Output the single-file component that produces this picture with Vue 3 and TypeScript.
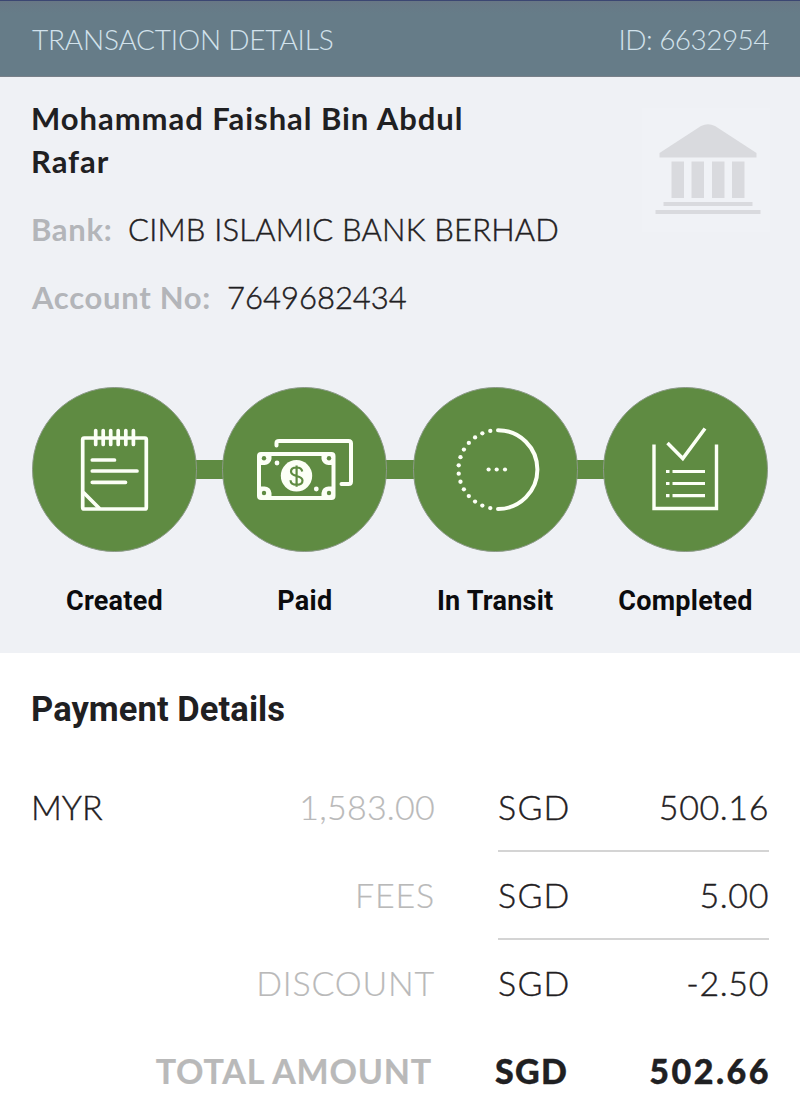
<script setup lang="ts">
interface Row {
  left?: string
  label: string
  currency: string
  amount: string
  ruled: boolean
  total?: boolean
}

const steps: string[] = ['Created', 'Paid', 'In Transit', 'Completed']

const rows: Row[] = [
  { left: 'MYR', label: '1,583.00', currency: 'SGD', amount: '500.16', ruled: true },
  { label: 'FEES', currency: 'SGD', amount: '5.00', ruled: true },
  { label: 'DISCOUNT', currency: 'SGD', amount: '-2.50', ruled: false },
  { label: 'TOTAL AMOUNT', currency: 'SGD', amount: '502.66', ruled: false, total: true },
]

// Dots of the dashed half of the transit ring
const ringDots = Array.from({ length: 14 }, (_, i) => {
  const a = ((101 + i * 12.15) * Math.PI) / 180
  return { x: 84.8 + 39.3 * Math.cos(a), y: 82.5 - 39.3 * Math.sin(a) }
})
</script>

<template>
  <main class="page">
    <header class="bar">
      <span class="bar-title">TRANSACTION DETAILS</span>
      <span class="bar-id">ID: 6632954</span>
    </header>

    <section class="summary">
      <div class="who">
        <div class="info">
          <h1 class="name">Mohammad Faishal Bin Abdul Rafar</h1>
          <p class="field"><span class="key k-bank">Bank:</span><span class="val v-bank">CIMB ISLAMIC BANK BERHAD</span></p>
          <p class="field"><span class="key k-acc">Account No:</span><span class="val v-acc">7649682434</span></p>
        </div>
        <div class="logo">
          <svg width="128" height="124" viewBox="0 0 128 124" fill="#d9dade">
            <path d="M17.500 49.500V45L59 18Q66 14.500 73 18L114.500 45V49.500Z" />
            <path d="M29.500 53.500h12.500v36.500h-12.500zM49.500 53.500h12.500v36.500h-12.500zM70 53.500h12.500v36.500h-12.500zM90 53.500h12.500v36.500h-12.500zM21.500 94h89v4h-89zM13.500 102h105v4h-105z" />
          </svg>
        </div>
      </div>

      <ol class="steps">
        <li v-for="(s, i) in steps" :key="s" class="step">
          <div class="disc">
            <svg v-if="i === 0" class="icon" viewBox="0 0 165 165" fill="none" stroke="#fcfff6" stroke-width="3.7" stroke-linecap="round" stroke-linejoin="round">
              <rect x="50.700" y="51" width="63.600" height="71" rx="1.500" />
              <path d="M63.700 43.500v14M71.200 43.500v14M78.700 43.500v14M86.200 43.500v14M93.800 43.500v14M101.400 43.500v14" />
              <path d="M60.300 73H82.500M60.300 84H105M60.300 95.300H93.500M52 106L67 121" />
            </svg>
            <svg v-else-if="i === 1" class="icon" viewBox="0 0 165 165" fill="none" stroke="#fcfff6" stroke-width="4">
              <path d="M54.500 58.500V56Q54.500 54 57 54H126.500Q129 54 129 56.500V94.500Q129 97 126.500 97H119.500" stroke-linecap="round" />
              <rect x="37" y="67" width="74.500" height="44" rx="2" />
              <g fill="#fcfff6" stroke="none">
                <path d="M37 67H49.500V72A7 7 0 0 1 42.500 78H37ZM111.500 67H99.500V72A7 7 0 0 0 106.500 78H111.500ZM37 111H49.500V106A7 7 0 0 0 42.500 99.500H37ZM111.500 111H99.500V106A7 7 0 0 1 106.500 99.500H111.500Z" />
                <circle cx="74.500" cy="88.800" r="15.700" />
                <circle cx="55" cy="76" r="2.400" />
                <circle cx="94.300" cy="102" r="2.400" />
              </g>
              <g fill="#5f8b42" stroke="none">
                <circle cx="42" cy="71.300" r="2.200" /><circle cx="107" cy="71.300" r="2.200" />
                <circle cx="42" cy="106" r="2.200" /><circle cx="107" cy="106" r="2.200" />
              </g>
              <path d="M80.200 84.500C79.800 81.500 77.500 80.500 74.500 80.500C71.300 80.500 69 82 69 84.500C69 87.500 71.500 88.200 74.500 89C77.800 89.800 80.500 90.700 80.500 93.500C80.500 96.300 78 97.800 74.700 97.800C71.200 97.800 68.700 96.300 68.500 93.200M74.600 78.500V99.800" stroke="#5f8b42" stroke-width="2.200" />
            </svg>
            <svg v-else-if="i === 2" class="icon" viewBox="0 0 165 165" fill="#fcfff6">
              <path d="M85 43.200A39.400 39.400 0 0 1 85 122" fill="none" stroke="#fcfff6" stroke-width="4" stroke-linecap="round" />
              <circle v-for="(d, n) in ringDots" :key="n" :cx="d.x" :cy="d.y" r="2.150" />
              <circle cx="75.600" cy="82.500" r="2.100" /><circle cx="83.700" cy="82.500" r="2.100" /><circle cx="92" cy="82.500" r="2.100" />
            </svg>
            <svg v-else class="icon" viewBox="0 0 165 165" fill="none" stroke="#fcfff6" stroke-width="3.400">
              <path d="M51 57.500V121.500H113.500V57.500" />
              <path d="M64.500 56L79.800 71.500L102 41.500" stroke-width="3.500" />
              <path d="M63 84.500h3.500M69.500 84.500h32.500M63 96.500h3.500M69.500 96.500h32.500M63 108.700h3.500M69.500 108.700h32.500" stroke-width="3.200" />
            </svg>
          </div>
          <span class="step-label">{{ s }}</span>
        </li>
      </ol>
    </section>

    <section class="payment">
      <h2 class="heading">Payment Details</h2>
      <div v-for="r in rows" :key="r.label" class="row" :class="{ total: r.total }">
        <span class="origin">{{ r.left }}</span>
        <span class="label" :class="{ num: r.left }">{{ r.label }}</span>
        <div class="sum" :class="{ ruled: r.ruled }">
          <span class="cur">{{ r.currency }}</span>
          <span class="amt">{{ r.amount }}</span>
        </div>
      </div>
    </section>
  </main>
</template>

<style>
body {
  margin: 0;
  background: #fff;
}
</style>

<style scoped>
.page {
  width: 800px;
  height: 1113px;
  overflow: hidden;
  background: #fff;
  color: #1f2022;
  font-family: Lato, "Liberation Sans", sans-serif;
}
.bar {
  box-sizing: border-box;
  height: 77px;
  padding: 0 31px 0 32px;
  border-top: 1px solid #3b4672;
  border-bottom: 1px solid #788089;
  background: linear-gradient(#687785, #667c88 12px);
  display: flex;
  justify-content: space-between;
  line-height: 77px;
  font-size: 28px;
  font-weight: 300;
  color: #d2e2ec;
  white-space: nowrap;
}
.bar-title { letter-spacing: -0.2px; }
.bar-id { letter-spacing: -0.55px; }
.summary {
  box-sizing: border-box;
  height: 576px;
  padding: 20px 32px 0;
  background: #eff1f5;
}
.who {
  display: flex;
  justify-content: space-between;
  height: 289.5px;
}
.info { width: 560px; }
.name {
  margin: 0 0 13px -1px;
  width: 450px;
  font-size: 31px;
  line-height: 42.5px;
  font-weight: 700;
  letter-spacing: 0.95px;
}
.field {
  margin: 0;
  display: flex;
  height: 68px;
  line-height: 68px;
  font-size: 31px;
  white-space: nowrap;
}
.key {
  color: #b3b5b9;
  font-weight: 700;
}
.val {
  font-weight: 300;
  -webkit-text-stroke: 0.45px currentColor;
}
.k-bank {
  width: 97px;
  margin-left: -1px;
  letter-spacing: 0.7px;
}
.k-acc {
  width: 195px;
  letter-spacing: 0.7px;
}
.v-bank { letter-spacing: 0.2px; }
.logo {
  width: 128px;
  height: 124px;
  margin: 11px -2px 0 0;
  background: #f0f2f6;
}
.logo svg { display: block; }
.steps {
  list-style: none;
  margin: 0;
  padding: 0;
  display: flex;
  justify-content: space-between;
  background: linear-gradient(#5f8b42, #5f8b42) 80px 73px / 570px 19px no-repeat;
}
.step {
  width: 165px;
  display: flex;
  flex-direction: column;
  align-items: center;
}
.disc {
  box-sizing: border-box;
  width: 165px;
  height: 165px;
  border-radius: 50%;
  background: #5f8b42;
  border: 1px solid #8c9a88;
}
.icon {
  display: block;
  width: 165px;
  height: 165px;
  margin: -1px;
}
.step-label {
  margin-top: 33.5px;
  line-height: 32px;
  font-family: Roboto, sans-serif;
  font-size: 27px;
  font-weight: 700;
  letter-spacing: 0.25px;
  color: #0b0b0d;
  white-space: nowrap;
}
.payment { padding: 36px 31px 0 32px; }
.heading {
  margin: 0 0 35px -1px;
  font-family: Roboto, sans-serif;
  font-size: 34.5px;
  line-height: 40px;
  font-weight: 700;
  letter-spacing: 0.08px;
}
.row {
  display: grid;
  grid-template-columns: 100px 303px 271px;
  height: 88px;
  line-height: 86px;
  font-size: 34px;
  font-weight: 300;
  white-space: nowrap;
}
.origin,
.sum {
  -webkit-text-stroke: 0.4px currentColor;
}
.origin { margin-left: -1px; }
.label {
  text-align: right;
  color: #b9b9b9;
  letter-spacing: 0.8px;
  -webkit-text-stroke: 0.2px currentColor;
}
.num { letter-spacing: 0.25px; }
.sum {
  display: flex;
  justify-content: space-between;
  box-sizing: border-box;
  margin-left: 63px;
  width: 271px;
  border-bottom: 2px solid transparent;
}
.ruled { border-bottom-color: #d4d4d4; }
.cur { letter-spacing: 1.2px; }
.amt { letter-spacing: 0.6px; }
.total .label {
  padding-right: 3px;
  font-weight: 700;
}
.total .sum {
  font-weight: 900;
}
.total .cur {
  margin-left: -3px;
  letter-spacing: 1.3px;
}
.total .amt {
  margin-right: -2px;
  letter-spacing: 2.5px;
}
</style>
